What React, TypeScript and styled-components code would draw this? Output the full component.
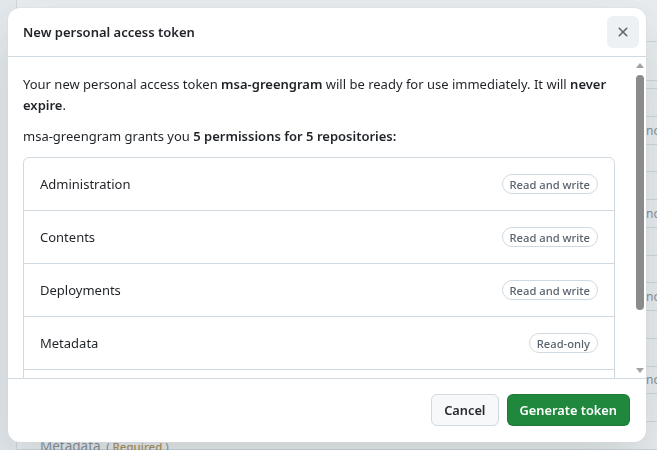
import React from 'react';
import styled, { createGlobalStyle } from 'styled-components';

const GlobalStyle = createGlobalStyle`
  html, body {
    margin: 0;
    height: 100%;
    overflow: hidden;
  }
  body {
    background: #f6f8fa;
    font-family: "Noto Sans", "Open Sans", sans-serif;
    color: #1f2328;
  }
`;

/* page behind the dialog */

const Page = styled.div`
  height: 100vh;
  padding-left: 16px;
`;

const Panel = styled.div`
  height: 100%;
  background: #fff;
  border-left: 1px solid #d1d9e0;
  display: flex;
  flex-direction: column;
`;

const PanelRow = styled.div<{ $h: number }>`
  flex: 0 0 auto;
  height: ${(p) => p.$h}px;
  box-sizing: border-box;
  border-bottom: 1px solid #d1d9e0;
  display: grid;
  grid-template-columns: 614px 1fr;
  align-items: center;
`;

const RowLabel = styled.div`
  align-self: end;
  padding-left: 23px;
  font-size: 13.5px;
  line-height: 20px;
  color: #59636e;
  white-space: nowrap;
  transform: translateY(8px);
`;

const Required = styled.span`
  font-size: 11.5px;
  color: #9a6700;
  font-weight: 500;
  margin-left: 2px;
  & b {
    color: #59636e;
    font-weight: 400;
  }
`;

const Access = styled.div`
  padding-left: 15px;
  font-size: 12px;
  color: #59636e;
  white-space: nowrap;
`;

/* dialog */

const Overlay = styled.div`
  position: fixed;
  inset: 0;
  background: #c8d1da66;
  display: flex;
  align-items: center;
  justify-content: center;
`;

const Dialog = styled.div`
  width: 638px;
  height: 434px;
  margin-left: -3px;
  background: #fff;
  border-radius: 12px;
  box-shadow: 0 0 0 1px rgba(209, 217, 224, 0.4), 0 24px 60px rgba(37, 41, 46, 0.16);
  display: flex;
  flex-direction: column;
  overflow: hidden;
`;

const Header = styled.div`
  display: flex;
  align-items: center;
  padding: 8px 7px 8px 8px;
  border-bottom: 1px solid #d1d9e0;
`;

const Title = styled.h1`
  flex: 1;
  margin: 0;
  padding: 6px 7px;
  font-size: 13px;
  font-weight: 600;
  line-height: 20px;
`;

const CloseButton = styled.button`
  width: 32px;
  height: 32px;
  border: none;
  border-radius: 6px;
  background: #eef1f4;
  color: #59636e;
  display: flex;
  align-items: center;
  justify-content: center;
  padding: 0;
  cursor: pointer;
`;

const Body = styled.div`
  flex: 1;
  min-height: 0;
  display: flex;
`;

const Content = styled.div`
  flex: 1;
  overflow: hidden;
  padding: 17px 18px 0 15px;
  font-size: 13px;
  line-height: 21px;
`;

const ScrollBar = styled.div`
  width: 13px;
  display: flex;
  flex-direction: column;
  align-items: center;
`;

const Arrow = styled.div<{ $down?: boolean }>`
  height: 16px;
  display: flex;
  align-items: center;
  justify-content: center;
  &::before {
    content: '';
    border-left: 4.5px solid transparent;
    border-right: 4.5px solid transparent;
    ${(p) => (p.$down ? 'border-top' : 'border-bottom')}: 5px solid #a3a3a3;
  }
`;

const Thumb = styled.div`
  width: 8px;
  height: 235px;
  margin-top: 2px;
  margin-bottom: auto;
  border-radius: 4px;
  background: #8b8b8b;
`;

const Text = styled.p`
  margin: 0 0 10px;
  & strong {
    font-weight: 600;
  }
`;

const PermissionList = styled.ul`
  list-style: none;
  margin: 0;
  padding: 0;
  border: 1px solid #d1d9e0;
  border-radius: 6px;
`;

const PermissionItem = styled.li`
  height: 52px;
  padding: 0 16px;
  display: flex;
  align-items: center;
  justify-content: space-between;
  & + & {
    border-top: 1px solid #d1d9e0;
  }
`;

const Pill = styled.span`
  display: inline-flex;
  align-items: center;
  height: 20px;
  box-sizing: border-box;
  padding: 0 7px;
  border: 1px solid #d1d9e0;
  border-radius: 2em;
  font-size: 11.2px;
  font-weight: 500;
  color: #59636e;
`;

const Footer = styled.div`
  display: flex;
  justify-content: flex-end;
  gap: 8px;
  padding: 15px 16px 16px;
  border-top: 1px solid #d1d9e0;
`;

const Button = styled.button<{ $primary?: boolean }>`
  height: 32px;
  padding: 0 12px;
  border-radius: 6px;
  font-family: inherit;
  font-size: 12.8px;
  font-weight: 600;
  cursor: pointer;
  border: 1px solid ${(p) => (p.$primary ? 'rgba(31, 35, 40, 0.15)' : '#d1d9e0')};
  background: ${(p) => (p.$primary ? '#1f883d' : '#f6f8fa')};
  color: ${(p) => (p.$primary ? '#fff' : '#25292e')};
`;

const XIcon = () => (
  <svg width="16" height="16" viewBox="0 0 16 16" fill="currentColor" aria-hidden="true">
    <path d="M3.72 3.72a.75.75 0 0 1 1.06 0L8 6.94l3.22-3.22a.749.749 0 0 1 1.275.326.749.749 0 0 1-.215.734L9.06 8l3.22 3.22a.749.749 0 0 1-.326 1.275.749.749 0 0 1-.734-.215L8 9.06l-3.22 3.22a.751.751 0 0 1-1.042-.018.751.751 0 0 1-.018-1.042L6.94 8 3.72 4.78a.75.75 0 0 1 0-1.06Z" />
  </svg>
);

const permissions = [
  { name: 'Administration', access: 'Read and write' },
  { name: 'Contents', access: 'Read and write' },
  { name: 'Deployments', access: 'Read and write' },
  { name: 'Metadata', access: 'Read-only' },
  { name: 'Workflows', access: 'Read and write' },
];

const backRows = [42, 39, 8, ...Array(13).fill(27.75)];

export default function App() {
  return (
    <>
      <GlobalStyle />
      <Page>
        <Panel>
          {backRows.map((h, i) => (
            <PanelRow key={i} $h={h}>
              {i === 15 ? (
                <RowLabel>
                  Metadata{' '}
                  <Required>
                    <b>(</b> Required <b>)</b>
                  </Required>
                </RowLabel>
              ) : (
                <div />
              )}
              {i >= 4 && (i - 4) % 3 === 0 ? <Access>no access</Access> : null}
            </PanelRow>
          ))}
        </Panel>
      </Page>

      <Overlay>
        <Dialog role="dialog" aria-label="New personal access token">
          <Header>
            <Title>New personal access token</Title>
            <CloseButton aria-label="Close">
              <XIcon />
            </CloseButton>
          </Header>
          <Body>
            <Content>
              <Text>
                Your new personal access token <strong>msa-greengram</strong> will be ready for use
                immediately. It will <strong>never expire</strong>.
              </Text>
              <Text>
                msa-greengram grants you <strong>5 permissions for 5 repositories:</strong>
              </Text>
              <PermissionList>
                {permissions.map((p) => (
                  <PermissionItem key={p.name}>
                    <span>{p.name}</span>
                    <Pill>{p.access}</Pill>
                  </PermissionItem>
                ))}
              </PermissionList>
            </Content>
            <ScrollBar aria-hidden="true">
              <Arrow />
              <Thumb />
              <Arrow $down />
            </ScrollBar>
          </Body>
          <Footer>
            <Button>Cancel</Button>
            <Button $primary>Generate token</Button>
          </Footer>
        </Dialog>
      </Overlay>
    </>
  );
}
